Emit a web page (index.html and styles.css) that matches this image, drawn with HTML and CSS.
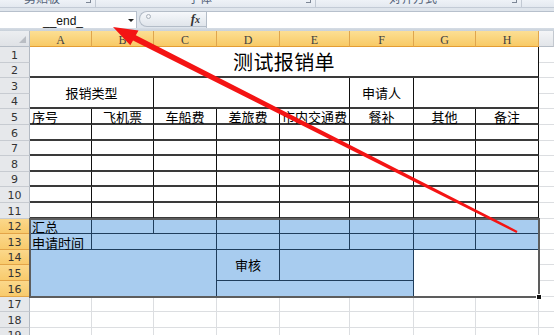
FILE: index.html
```html
<!DOCTYPE html>
<html lang="zh-CN">
<head>
<meta charset="utf-8">
<title>测试报销单</title>
<link rel="stylesheet" href="styles.css">
</head>
<body>
<div class="ribbon">
  <div class="grp g1"><span class="glabel">剪贴板</span><span class="launch"></span></div>
  <div class="grp g2"><span class="glabel">字体</span><span class="launch"></span></div>
  <div class="grp g3"><span class="glabel">对齐方式</span><span class="launch"></span></div>
  <div class="grp g4"></div>
</div>
<div class="fbar">
  <div class="namebox"><span class="nbtext">__end_</span><span class="dd"></span></div>
  <div class="pill"><span class="knob"></span><span class="fx">f<span class="fxx">x</span></span></div>
  <div class="finput"></div>
</div>
<div class="band"></div>
<div class="sheet">
  <div class="corner"></div>
  <div class="ch sel">A</div><div class="ch sel">B</div><div class="ch sel">C</div><div class="ch sel">D</div>
  <div class="ch sel">E</div><div class="ch sel">F</div><div class="ch sel">G</div><div class="ch sel">H</div>
  <div class="ch"></div>

  <div class="rh">1</div>
  <div class="c title s8 r2 m">测试报销单</div>
  <div class="gl x"></div>
  <div class="rh">2</div>
  <div class="gl x"></div>

  <div class="rh">3</div>
  <div class="c s2 r2 m v">报销类型</div>
  <div class="c s3 r2"></div>
  <div class="c r2 m v">申请人</div>
  <div class="c s2 r2"></div>
  <div class="gl x"></div>
  <div class="rh">4</div>
  <div class="gl x"></div>

  <div class="rh">5</div>
  <div class="c l">序号</div><div class="c m">飞机票</div><div class="c m">车船费</div><div class="c m">差旅费</div>
  <div class="c m">市内交通费</div><div class="c m">餐补</div><div class="c m">其他</div><div class="c m">备注</div>
  <div class="gl x"></div>

  <div class="rh">6</div>
  <div class="c"></div><div class="c"></div><div class="c"></div><div class="c"></div><div class="c"></div><div class="c"></div><div class="c"></div><div class="c"></div>
  <div class="gl x"></div>
  <div class="rh">7</div>
  <div class="c"></div><div class="c"></div><div class="c"></div><div class="c"></div><div class="c"></div><div class="c"></div><div class="c"></div><div class="c"></div>
  <div class="gl x"></div>
  <div class="rh">8</div>
  <div class="c"></div><div class="c"></div><div class="c"></div><div class="c"></div><div class="c"></div><div class="c"></div><div class="c"></div><div class="c"></div>
  <div class="gl x"></div>
  <div class="rh">9</div>
  <div class="c"></div><div class="c"></div><div class="c"></div><div class="c"></div><div class="c"></div><div class="c"></div><div class="c"></div><div class="c"></div>
  <div class="gl x"></div>
  <div class="rh">10</div>
  <div class="c"></div><div class="c"></div><div class="c"></div><div class="c"></div><div class="c"></div><div class="c"></div><div class="c"></div><div class="c"></div>
  <div class="gl x"></div>
  <div class="rh">11</div>
  <div class="c"></div><div class="c"></div><div class="c"></div><div class="c"></div><div class="c"></div><div class="c"></div><div class="c"></div><div class="c"></div>
  <div class="gl x"></div>

  <div class="rh sel">12</div>
  <div class="b l">汇总</div><div class="b"></div><div class="b"></div><div class="b"></div><div class="b"></div><div class="b"></div><div class="b"></div><div class="b"></div>
  <div class="gl x"></div>
  <div class="rh sel">13</div>
  <div class="b l">申请时间</div><div class="b s2"></div><div class="b"></div><div class="b"></div><div class="b"></div><div class="b"></div><div class="b"></div>
  <div class="gl x"></div>
  <div class="rh sel">14</div>
  <div class="b s3 r3"></div>
  <div class="b r2 m v">审核</div>
  <div class="b s2 r2"></div>
  <div class="w s2 r3"></div>
  <div class="gl x"></div>
  <div class="rh sel">15</div>
  <div class="gl x"></div>
  <div class="rh sel">16</div>
  <div class="b s3"></div>
  <div class="gl x"></div>

  <div class="rh">17</div>
  <div class="gl"></div><div class="gl"></div><div class="gl"></div><div class="gl"></div><div class="gl"></div><div class="gl"></div><div class="gl"></div><div class="gl"></div>
  <div class="gl x"></div>
  <div class="rh">18</div>
  <div class="gl"></div><div class="gl"></div><div class="gl"></div><div class="gl"></div><div class="gl"></div><div class="gl"></div><div class="gl"></div><div class="gl"></div>
  <div class="gl x"></div>
  <div class="rh">19</div>
  <div class="gl"></div><div class="gl"></div><div class="gl"></div><div class="gl"></div><div class="gl"></div><div class="gl"></div><div class="gl"></div><div class="gl"></div>
  <div class="gl x"></div>

  <div class="selection"><span class="handle"></span></div>
</div>
<svg class="arrow" width="554" height="335" viewBox="0 0 554 335">
  <polygon points="113,27 138.5,30.4 135.8,35.2 517.5,230.9 516.5,233.1 133.0,40.5 130.3,45.3" fill="#f41414"/>
</svg>
</body>
</html>
```

FILE: styles.css
```css
* { box-sizing: border-box; }
html, body { margin: 0; padding: 0; }
body {
  width: 554px;
  height: 335px;
  overflow: hidden;
  position: relative;
  background: #dfe5ec;
  font-family: "Noto Sans CJK SC", "Liberation Sans", sans-serif;
  color: #000;
}

/* ribbon bottom strip */
.ribbon {
  height: 8px;
  display: flex;
  background: linear-gradient(#eef2f7, #e4e9f0);
  border-bottom: 1px solid #c3cbd6;
  overflow: hidden;
}
.grp {
  display: flex;
  align-items: flex-start;
  border-right: 1px solid #c2c9d3;
  position: relative;
}
.g1 { width: 96px; }
.g2 { width: 220px; }
.g3 { width: 206px; }
.g4 { flex: 1; border-right: none; }
.glabel {
  flex: 1;
  text-align: center;
  font-size: 12px;
  line-height: 12px;
  margin-top: -8px;
  color: #56657a;
}
.launch {
  width: 5px;
  height: 3px;
  margin: 0 4px 0 2px;
  border-right: 1px solid #7d8796;
  border-bottom: 1px solid #7d8796;
}

/* formula bar */
.fbar {
  height: 20px;
  display: flex;
  align-items: flex-end;
}
.namebox {
  width: 137px;
  height: 17px;
  background: #fff;
  border-top: 1px solid #b7c0cc;
  border-right: 1px solid #b7c0cc;
  display: flex;
  align-items: center;
  padding-top: 2px;
}
.nbtext {
  width: 126px;
  text-align: center;
  font-family: "Liberation Sans", sans-serif;
  font-size: 12px;
  line-height: 14px;
  color: #111;
}
.dd {
  width: 0;
  height: 0;
  margin-left: 2px;
  margin-top: -2px;
  border-left: 3px solid transparent;
  border-right: 3px solid transparent;
  border-top: 3px solid #222;
}
.pill {
  width: 67px;
  height: 16px;
  margin-left: 2px;
  margin-bottom: 1px;
  border: 1px solid #b4bdc8;
  border-right: none;
  border-radius: 8px 0 0 8px;
  background: linear-gradient(#f6f8fb, #e0e5eb);
  display: flex;
  align-items: center;
  position: relative;
}
.knob {
  width: 5px;
  height: 5px;
  border-radius: 50%;
  border: 1px solid #a9b1bb;
  background: #f2f4f7;
  margin-left: 6px;
  margin-top: -5px;
}
.fx {
  margin-left: auto;
  margin-right: 6px;
  font-family: "Liberation Serif", serif;
  font-style: italic;
  font-weight: bold;
  font-size: 13px;
  line-height: 14px;
  color: #333;
}
.fxx { font-size: 10px; }
.finput {
  flex: 1;
  height: 17px;
  background: #fff;
  border-top: 1px solid #b7c0cc;
  border-left: 1px solid #b4bdc8;
}
.band {
  height: 3px;
  background: linear-gradient(#d6dde5, #c8d0da);
}

/* sheet grid */
.sheet {
  position: relative;
  display: grid;
  grid-template-columns: 30px 62px 62px 63px 63px 70px 64px 62px 63px 15px;
  grid-template-rows: 16px repeat(19, 15.6px);
  height: 304px;
  overflow: hidden;
  background: #fff;
}
.corner {
  background: linear-gradient(#eceef1, #dfe2e6);
  border-right: 1px solid #b6bdc6;
  border-bottom: 1px solid #b6bdc6;
  position: relative;
}
.corner::after {
  content: "";
  position: absolute;
  right: 3px;
  bottom: 3px;
  width: 0;
  height: 0;
  border-left: 7px solid transparent;
  border-bottom: 7px solid #b9bdc3;
}
.ch {
  background: linear-gradient(#f4f5f7, #e2e5e9);
  border-right: 1px solid #c3c8cf;
  border-bottom: 1px solid #b6bdc6;
  display: flex;
  justify-content: center;
  align-items: flex-end;
  font-family: "Liberation Serif", serif;
  font-size: 12px;
  line-height: 12px;
  color: #404040;
}
.ch.sel {
  background: linear-gradient(#fcdf94, #f8ca66);
  border-right: 1px solid #dfa54d;
  border-bottom: 1px solid #e49d34;
}
.rh {
  background: #e6e8eb;
  border-right: 1px solid #b3bac3;
  border-bottom: 1px solid #c7cbd1;
  display: flex;
  justify-content: center;
  align-items: flex-end;
  font-family: "DejaVu Sans", sans-serif;
  font-size: 11px;
  line-height: 12px;
  color: #333;
}
.rh.sel {
  background: linear-gradient(#fbd88b, #f8ca6c);
  border-right: 1px solid #e09f3d;
  border-bottom: 1px solid #e3a447;
}

.c, .b, .w {
  display: flex;
  align-items: flex-end;
  font-size: 13px;
  line-height: 13px;
  white-space: nowrap;
  overflow: visible;
}
.c {
  border-right: 1px solid #111;
  border-bottom: 2px solid #3a3a3a;
}
.b {
  background: #a8ccef;
  border-right: 1px solid #1f3d5c;
  border-bottom: 1px solid #1f3d5c;
}
.w { background: #fff; }
.gl {
  border-right: 1px solid #dcdee1;
  border-bottom: 1px solid #dcdee1;
}
.gl.x { border-right: none; }

.l { padding-left: 2px; }
.m { justify-content: center; }
.v { align-items: center; }
.title {
  align-items: center;
  font-size: 20px;
  line-height: 20px;
  letter-spacing: 0.4px;
}
.s2 { grid-column: span 2; }
.s3 { grid-column: span 3; }
.s8 { grid-column: span 8; }
.r2 { grid-row: span 2; }
.r3 { grid-row: span 3; }

.selection {
  position: absolute;
  grid-column: 2 / 10;
  grid-row: 13 / 18;
  top: -1px;
  left: -1px;
  right: -1px;
  bottom: -1px;
  border: 2px solid #5d5d5d;
}
.handle {
  position: absolute;
  right: -4px;
  bottom: -4px;
  width: 6px;
  height: 6px;
  background: #111;
  border: 1px solid #fff;
}

.arrow {
  position: absolute;
  top: 0;
  left: 0;
  pointer-events: none;
}
```
